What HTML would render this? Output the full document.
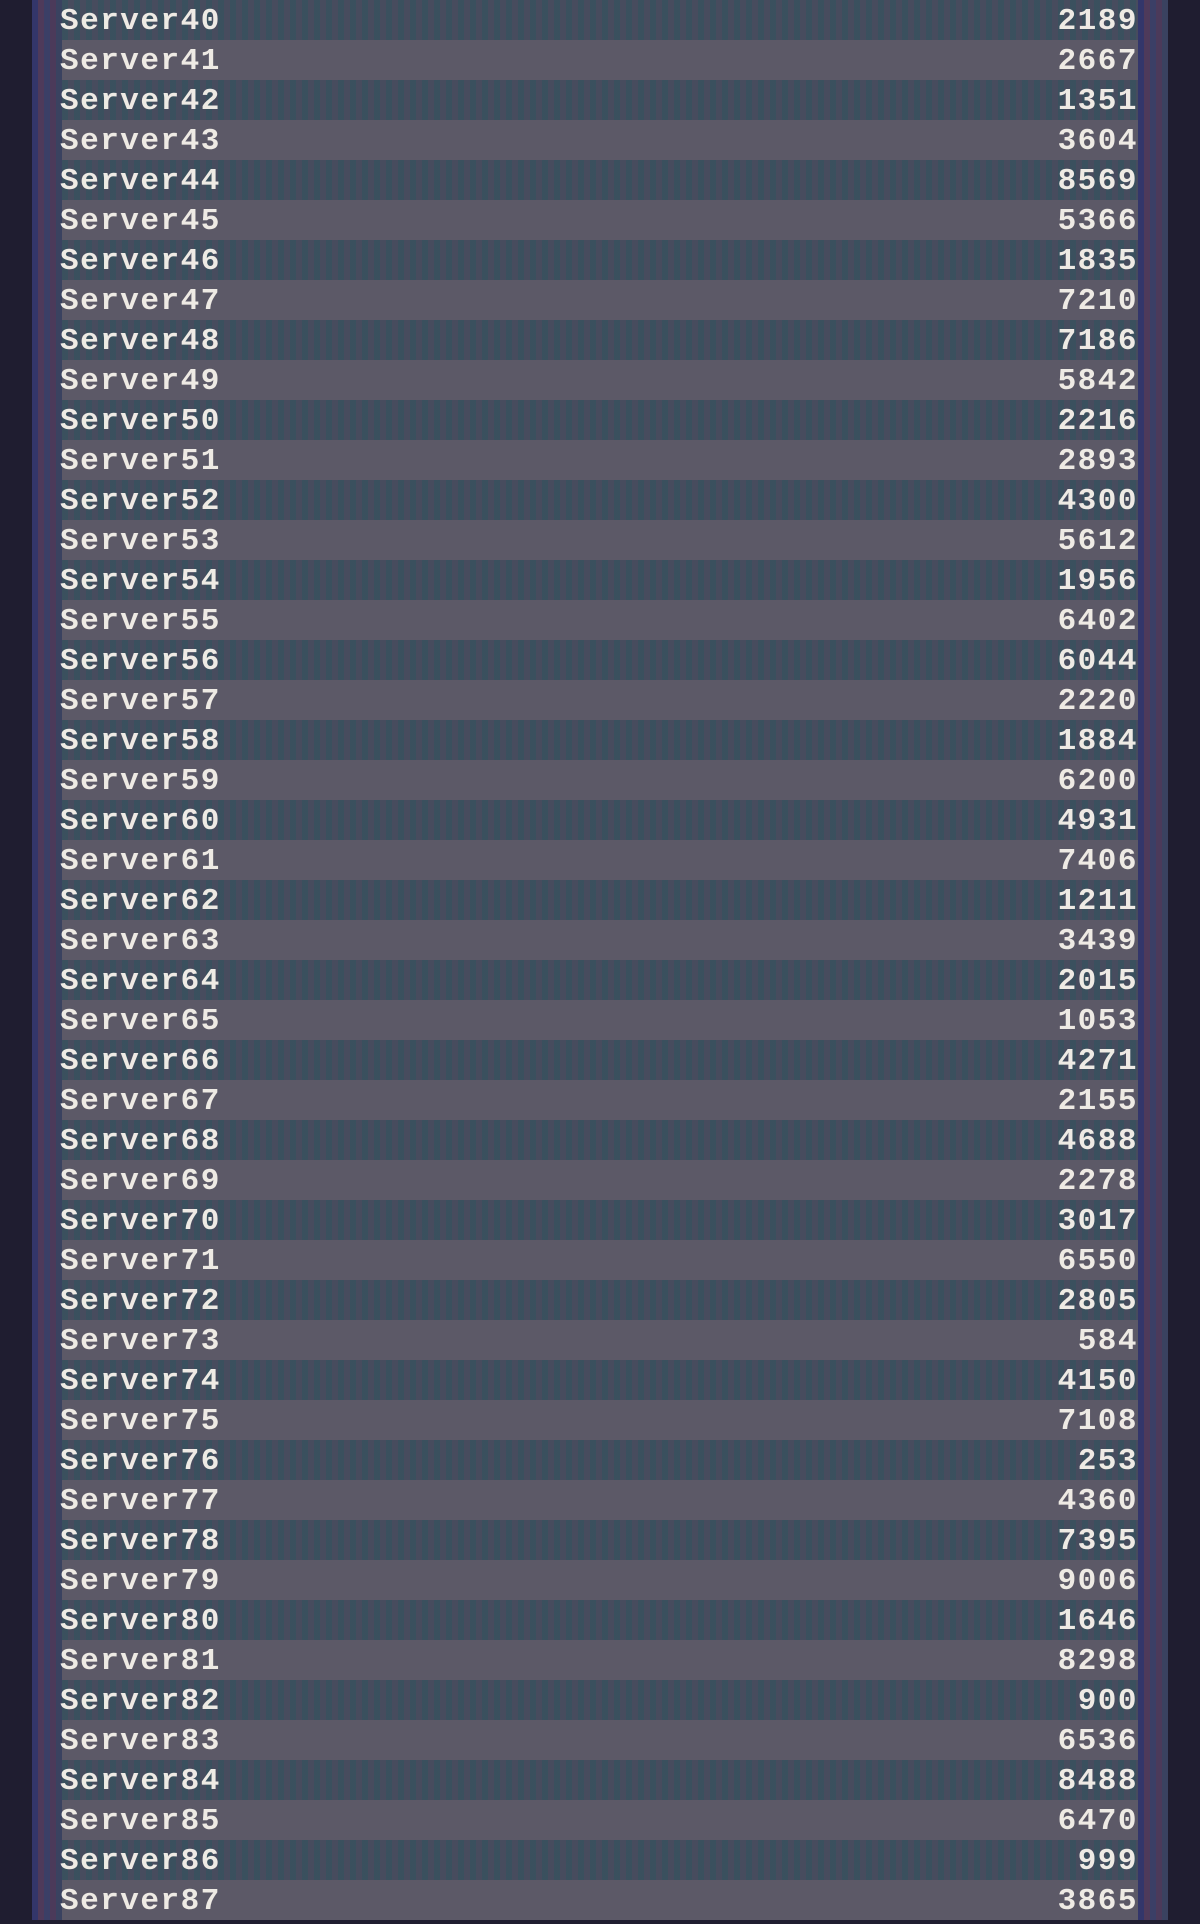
<!DOCTYPE html>
<html><head><meta charset="utf-8"><style>
html,body{margin:0;padding:0;width:1200px;height:1920px;overflow:hidden;background:#1f1d30;}
.wrap{position:absolute;left:32px;top:0;width:1136px;height:1920px;background:#393d62;}
.strip{position:absolute;top:0;height:1920px;width:30px;background:repeating-linear-gradient(90deg,#33366a 0 6px,#4e3a5a 6px 12px,#3b3f66 12px 18px,#4b3a5a 18px 24px,#3a4260 24px 30px);}
.row{position:absolute;left:62px;width:1076px;height:40px;font-family:"Liberation Mono",monospace;font-weight:bold;font-size:31px;color:#eeeae4;line-height:44px;}
.d{background-color:#474c5e;background-image:repeating-linear-gradient(90deg,rgba(40,85,95,.4) 0 6px,transparent 6px 12px);}
.l{background:#5c5967;}
.n{position:absolute;left:-2px;top:0;letter-spacing:1.5px;}
.v{position:absolute;right:0px;top:0;letter-spacing:1.5px;}
</style></head><body>
<div class="wrap"></div>
<div class="strip" style="left:32px"></div>
<div class="strip" style="left:1138px"></div>
<div id="rows"></div>
<script>
var vals=[2189,2667,1351,3604,8569,5366,1835,7210,7186,5842,2216,2893,4300,5612,1956,6402,6044,2220,1884,6200,4931,7406,1211,3439,2015,1053,4271,2155,4688,2278,3017,6550,2805,584,4150,7108,253,4360,7395,9006,1646,8298,900,6536,8488,6470,999,3865];
var h='';
for(var i=0;i<vals.length;i++){h+='<div class="row '+(i%2?'l':'d')+'" style="top:'+(i*40)+'px"><span class="n">Server'+(40+i)+'</span><span class="v">'+vals[i]+'</span></div>';}
document.getElementById('rows').innerHTML=h;
</script>
</body></html>
